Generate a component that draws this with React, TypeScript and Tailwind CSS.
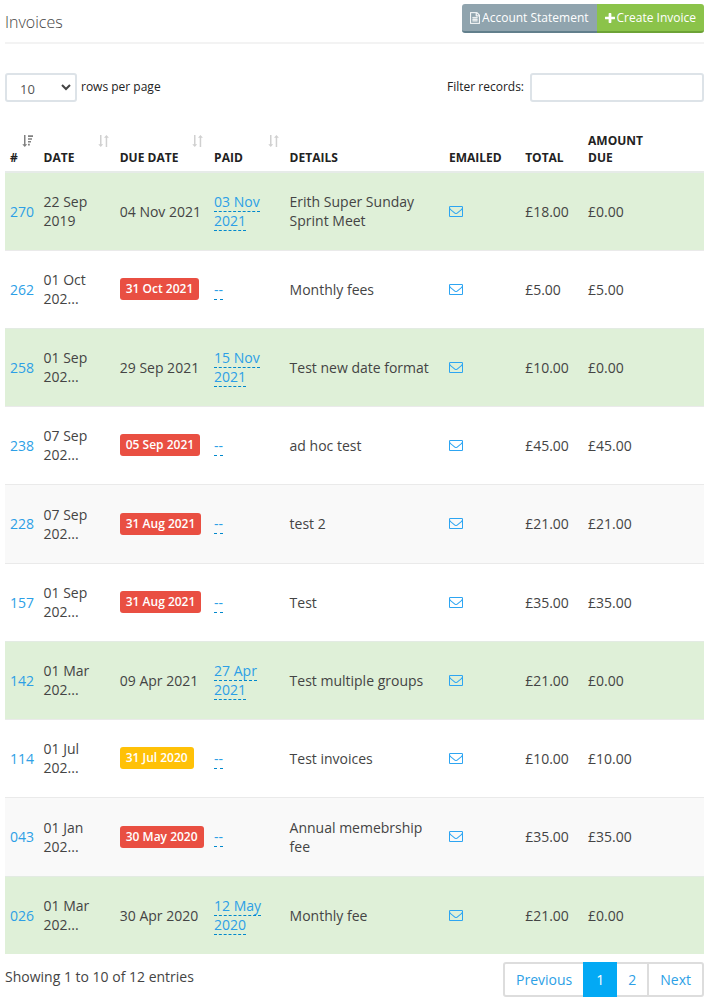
import { useState } from "react";

type Badge = "overdue" | "warning";

interface Invoice {
  id: string;
  date: [string, string];
  due: string;
  badge?: Badge;
  paid?: [string, string];
  details: string;
  total: string;
  amountDue: string;
  shaded?: boolean;
}

const invoices: Invoice[] = [
  { id: "270", date: ["22 Sep", "2019"], due: "04 Nov 2021", paid: ["03 Nov", "2021"], details: "Erith Super Sunday Sprint Meet", total: "£18.00", amountDue: "£0.00" },
  { id: "262", date: ["01 Oct", "202..."], due: "31 Oct 2021", badge: "overdue", details: "Monthly fees", total: "£5.00", amountDue: "£5.00" },
  { id: "258", date: ["01 Sep", "202..."], due: "29 Sep 2021", paid: ["15 Nov", "2021"], details: "Test new date format", total: "£10.00", amountDue: "£0.00" },
  { id: "238", date: ["07 Sep", "202..."], due: "05 Sep 2021", badge: "overdue", details: "ad hoc test", total: "£45.00", amountDue: "£45.00" },
  { id: "228", date: ["07 Sep", "202..."], due: "31 Aug 2021", badge: "overdue", details: "test 2", total: "£21.00", amountDue: "£21.00", shaded: true },
  { id: "157", date: ["01 Sep", "202..."], due: "31 Aug 2021", badge: "overdue", details: "Test", total: "£35.00", amountDue: "£35.00" },
  { id: "142", date: ["01 Mar", "202..."], due: "09 Apr 2021", paid: ["27 Apr", "2021"], details: "Test multiple groups", total: "£21.00", amountDue: "£0.00" },
  { id: "114", date: ["01 Jul", "202..."], due: "31 Jul 2020", badge: "warning", details: "Test invoices", total: "£10.00", amountDue: "£10.00" },
  { id: "043", date: ["01 Jan", "202..."], due: "30 May 2020", badge: "overdue", details: "Annual memebrship fee", total: "£35.00", amountDue: "£35.00", shaded: true },
  { id: "026", date: ["01 Mar", "202..."], due: "30 Apr 2020", paid: ["12 May", "2020"], details: "Monthly fee", total: "£21.00", amountDue: "£0.00" },
];

function FileIcon() {
  return (
    <svg viewBox="128 0 1536 1792" className="h-3 w-[10px]" fill="currentColor" aria-hidden="true">
      <path
        stroke="currentColor"
        strokeWidth="50"
        d="M1596 380q28 28 48 76t20 88v1152q0 40-28 68t-68 28h-1344q-40 0-68-28t-28-68v-1600q0-40 28-68t68-28h896q40 0 88 20t76 48zm-444-244v376h376q-10-29-22-41l-313-313q-12-12-41-22zm384 1528v-1024h-416q-40 0-68-28t-28-68v-416h-768v1536h1280zm-1024-864q0-14 9-23t23-9h704q14 0 23 9t9 23v64q0 14-9 23t-23 9h-704q-14 0-23-9t-9-23v-64zm736 224q14 0 23 9t9 23v64q0 14-9 23t-23 9h-704q-14 0-23-9t-9-23v-64q0-14 9-23t23-9h704zm0 256q14 0 23 9t9 23v64q0 14-9 23t-23 9h-704q-14 0-23-9t-9-23v-64q0-14 9-23t23-9h704z"
      />
    </svg>
  );
}

function PlusIcon() {
  return (
    <svg viewBox="192 128 1408 1408" className="size-[10px]" fill="currentColor" aria-hidden="true">
      <path d="M1600 736v192q0 40-28 68t-68 28h-416v416q0 40-28 68t-68 28h-192q-40 0-68-28t-28-68v-416h-416q-40 0-68-28t-28-68v-192q0-40 28-68t68-28h416v-416q0-40 28-68t68-28h192q40 0 68 28t28 68v416h416q40 0 68 28t28 68z" />
    </svg>
  );
}

function EnvelopeIcon() {
  return (
    <svg viewBox="0 256 1792 1408" className="h-[11px] w-[14px]" fill="currentColor" aria-hidden="true">
      <path d="M1664 1504v-768q-32 36-69 66-268 206-426 338-51 43-83 67t-86.5 48.5-102.5 24.5h-2q-48 0-102.5-24.5t-86.5-48.5-83-67q-158-132-426-338-37-30-69-66v768q0 13 9.5 22.5t22.5 9.5h1472q13 0 22.5-9.5t9.5-22.5zm0-1051v-24.5l-.5-13-3-12.5-5.5-9-9-7.5-14-2.5h-1472q-13 0-22.5 9.5t-9.5 22.5q0 168 147 284 193 152 401 317 6 5 35 29.5t46 37.5 44.5 31.5 50.5 27.5 43 9h2q20 0 43-9t50.5-27.5 44.5-31.5 46-37.5 35-29.5q208-165 401-317 54-43 100.5-115.5t46.5-131.5zm128-37v1088q0 66-47 113t-113 47h-1472q-66 0-113-47t-47-113v-1088q0-66 47-113t113-47h1472q66 0 113 47t47 113z" />
    </svg>
  );
}

function SortIcon() {
  return (
    <svg viewBox="0 0 11 12" className="h-3 w-[11px] text-[#d0d0d0]" fill="currentColor" aria-hidden="true">
      <path d="M2 0h1.5v9.3H5.2L2.75 12 .3 9.3H2zM7.7 12V2.7H6L8.45 0l2.45 2.7H9.2V12z" />
    </svg>
  );
}

function SortDescIcon() {
  return (
    <svg viewBox="0 0 11 12" className="h-3 w-[11px] text-[#808080]" fill="currentColor" aria-hidden="true">
      <path d="M2 0h1.5v9.3H5.2L2.75 12 .3 9.3H2zM6 0.3H11v1.7H6zM6 3.2h4v1.6H6zM6 6h3v1.6H6zM6 8.8h1.8v1.6H6z" />
    </svg>
  );
}

interface HeaderProps {
  label: string;
  sort?: "none" | "desc";
}

function HeaderCell({ label, sort }: HeaderProps) {
  return (
    <th scope="col" className="px-[5px] pb-[5px] text-left align-bottom text-xs leading-[17px] font-bold text-[#222]">
      {sort ? (
        <button type="button" className="block w-full text-left font-bold" aria-label={`Sort by ${label}`}>
          <span className="flex h-[17px] items-center justify-end pr-px">{sort === "desc" ? <SortDescIcon /> : <SortIcon />}</span>
          {label}
        </button>
      ) : (
        label
      )}
    </th>
  );
}

function rowColour(invoice: Invoice) {
  if (invoice.paid) return "bg-[#dff0d8] border-[#e3ebe3]";
  if (invoice.shaded) return "bg-[#f9f9f9] border-[#eaeaea]";
  return "bg-white border-[#eaeaea]";
}

function InvoiceRow({ invoice }: { invoice: Invoice }) {
  return (
    <tr className={`border-t ${invoice.shaded ? "h-[79px]" : "h-[78px]"} ${rowColour(invoice)}`}>
      <td className="px-[5px]">
        <a href={`#invoice-${invoice.id}`} className="text-[#2d9fe6]">{invoice.id}</a>
      </td>
      <td className="px-[5px]">
        {invoice.date[0]}
        <br />
        {invoice.date[1]}
      </td>
      <td className="px-[5px] whitespace-nowrap">
        {invoice.badge ? (
          <span
            className={`inline-block rounded-[3px] px-[6px] align-middle text-xs leading-[22px] font-semibold text-white ${
              invoice.badge === "overdue" ? "bg-[#e94f42]" : "bg-[#ffc107]"
            }`}
          >
            {invoice.due}
          </span>
        ) : (
          invoice.due
        )}
      </td>
      <td className="px-[5px]">
        <a href={`#payment-${invoice.id}`} className="border-b border-dashed border-[#0088cc] text-[#2d9fe6]">
          {invoice.paid ? (
            <>
              {invoice.paid[0]}
              <br />
              {invoice.paid[1]}
            </>
          ) : (
            "--"
          )}
        </a>
      </td>
      <td className="px-[5px]">{invoice.details}</td>
      <td className="px-[5px]">
        <a href={`#email-${invoice.id}`} aria-label={`Email invoice ${invoice.id}`} className="inline-block text-[#2da5f2]">
          <EnvelopeIcon />
        </a>
      </td>
      <td className="px-[5px]">{invoice.total}</td>
      <td className="px-[5px]">{invoice.amountDue}</td>
      <td />
    </tr>
  );
}

export default function App() {
  const [filter, setFilter] = useState("");
  const visible = invoices.filter((i) => `${i.id} ${i.details} ${i.due}`.toLowerCase().includes(filter.toLowerCase()));

  return (
    <main className="bg-white pr-1 pl-[5px] font-['Open_Sans','Noto_Sans',sans-serif] text-sm leading-[19px] text-[#444]">
      <header className="flex h-11 items-start justify-between border-b-2 border-[#f3f3f3] pt-1">
        <h1 className="pt-2 text-base leading-5 font-light text-[#444]">Invoices</h1>
        <div className="flex text-xs text-white">
          <button type="button" className="flex h-[29px] items-center gap-[2px] rounded-l-[3px] border-b-2 border-[#627f8c] bg-[#90a4ae] px-2">
            <FileIcon />
            Account Statement
          </button>
          <button type="button" className="flex h-[29px] items-center gap-[2px] rounded-r-[3px] border-b-2 border-[#6da336] bg-[#8bc34a] px-2">
            <PlusIcon />
            Create Invoice
          </button>
        </div>
      </header>

      <div className="flex items-start justify-between pt-[29px] text-xs text-[#222]">
        <label className="flex items-start gap-1">
          <span className="relative flex">
            <select defaultValue="10" className="h-[29px] w-[72px] appearance-none rounded-[3px] border-2 border-[#dde3e8] bg-white pt-1 pl-[13px] text-[13px] text-[#555]">
              <option>10</option>
              <option>25</option>
              <option>50</option>
            </select>
            <svg viewBox="0 0 10 7" className="pointer-events-none absolute top-[11px] right-[6px] h-[7px] w-[10px]" fill="none" stroke="#444" strokeWidth="2" aria-hidden="true">
              <path d="M1 1l4 4 4-4" />
            </svg>
          </span>
          <span className="pt-[6px]">rows per page</span>
        </label>
        <label className="flex items-start gap-[6px]">
          <span className="pt-[6px]">Filter records:</span>
          <input
            type="text"
            value={filter}
            onChange={(e) => setFilter(e.target.value)}
            className="h-[29px] w-[174px] rounded-[3px] border-2 border-[#dde3e8] bg-white px-2 text-[13px]"
          />
        </label>
      </div>

      <table className="mt-[30px] w-full table-fixed border-collapse">
        <colgroup>
          <col className="w-[4.8%]" />
          <col className="w-[10.9%]" />
          <col className="w-[13.5%]" />
          <col className="w-[10.8%]" />
          <col className="w-[22.8%]" />
          <col className="w-[10.9%]" />
          <col className="w-[9%]" />
          <col className="w-[9.4%]" />
          <col />
        </colgroup>
        <thead>
          <tr className="border-b-2 border-[#e6ebe8]">
            <HeaderCell label="#" sort="desc" />
            <HeaderCell label="DATE" sort="none" />
            <HeaderCell label="DUE DATE" sort="none" />
            <HeaderCell label="PAID" sort="none" />
            <HeaderCell label="DETAILS" />
            <HeaderCell label="EMAILED" />
            <HeaderCell label="TOTAL" />
            <HeaderCell label="AMOUNT DUE" />
            <td />
          </tr>
        </thead>
        <tbody>
          {visible.map((invoice) => (
            <InvoiceRow key={invoice.id} invoice={invoice} />
          ))}
        </tbody>
      </table>

      <footer className="flex items-start justify-between">
        <p className="pt-[13px]">Showing 1 to 10 of 12 entries</p>
        <nav aria-label="Invoice pages" className="mt-2 flex h-[35px] rounded-[3px] border-2 border-[#ddd] text-[#2d9fe6]">
          <a href="#previous" className="flex items-center px-[11px]">Previous</a>
          <a href="#page-1" aria-current="page" className="-my-[2px] flex items-center bg-[#03a9f4] px-[13px] text-white">1</a>
          <a href="#page-2" className="flex items-center px-[11px]">2</a>
          <a href="#next" className="flex items-center border-l-2 border-[#ddd] px-[11px]">Next</a>
        </nav>
      </footer>
    </main>
  );
}
